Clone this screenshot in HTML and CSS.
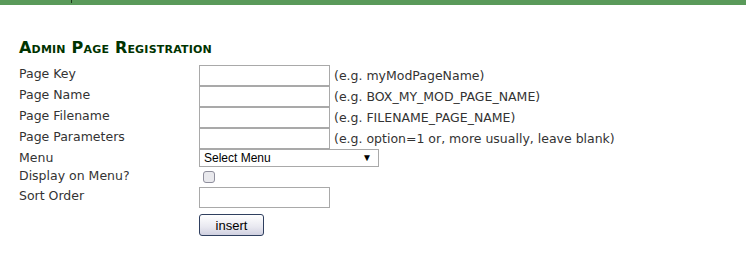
FILE: index.html
```html
<!DOCTYPE html>
<html>
<head>
  <title>Admin Page Registration</title>
  <link rel="stylesheet" href="styles.css">
</head>
<body>
  <div class="topbar"><span class="tick"></span></div>
  <div class="content">
    <h1>Admin Page Registration</h1>
    <form class="reg-form">
      <label for="pageKey">Page Key</label>
      <div class="field"><input type="text" id="pageKey"><span class="hint">(e.g. myModPageName)</span></div>

      <label for="pageName">Page Name</label>
      <div class="field"><input type="text" id="pageName"><span class="hint">(e.g. BOX_MY_MOD_PAGE_NAME)</span></div>

      <label for="pageFile">Page Filename</label>
      <div class="field"><input type="text" id="pageFile"><span class="hint">(e.g. FILENAME_PAGE_NAME)</span></div>

      <label for="pageParams">Page Parameters</label>
      <div class="field"><input type="text" id="pageParams"><span class="hint">(e.g. option=1 or, more usually, leave blank)</span></div>

      <label for="menu">Menu</label>
      <div class="field menu-row">
        <div class="select-box" id="menu">Select Menu<span class="arrow">&#9660;</span></div>
      </div>

      <label for="display">Display on Menu?</label>
      <div class="field check-row"><span class="checkbox" id="display"></span></div>

      <label for="sortOrder">Sort Order</label>
      <div class="field sort-row"><input type="text" id="sortOrder"></div>

      <span></span>
      <div class="field button-row"><button type="button" class="insert-btn">insert</button></div>
    </form>
  </div>
</body>
</html>
```

FILE: styles.css
```css
body {
  margin: 0;
  font-family: "DejaVu Sans", Verdana, sans-serif;
  font-size: 12.5px;
  color: #333;
  background-color: white;
}
.topbar {
  height: 5px;
  background-color: #5a9a5a;
  position: relative;
}
.tick {
  position: absolute;
  left: 71px;
  top: 0;
  width: 1px;
  height: 3px;
  background-color: #1e3a1e;
}
.content {
  padding: 33px 19px 0 19px;
}
h1 {
  margin: 0 0 8px 0;
  font-family: "DejaVu Sans", Tahoma, sans-serif;
  font-size: 16px;
  line-height: 19px;
  font-weight: bold;
  font-variant: small-caps;
  letter-spacing: 0.2px;
  color: #003300;
}
.reg-form {
  display: grid;
  grid-template-columns: 180px auto;
  align-items: start;
}
label {
  line-height: 19px;
  margin-top: -1px;
}
.field {
  display: flex;
  align-items: center;
  height: 21px;
}
input {
  box-sizing: border-box;
  width: 131px;
  height: 21px;
  margin: 0;
  border: 1px solid #a9a9a9;
  padding: 2px;
  font-size: 12px;
}
.hint {
  margin-left: 4px;
}
.menu-row {
  height: 18px;
}
.select-box {
  box-sizing: border-box;
  width: 180px;
  height: 18px;
  border: 1px solid #a9a9a9;
  font-family: "Liberation Sans", Arial, sans-serif;
  font-size: 12px;
  color: black;
  padding: 1px 6px 1px 4px;
  line-height: 14px;
  display: flex;
  justify-content: space-between;
}
.arrow {
  font-size: 10px;
  line-height: 14px;
}
.check-row {
  height: 20px;
  align-items: flex-start;
}
.checkbox {
  display: block;
  box-sizing: border-box;
  width: 12px;
  height: 12px;
  margin: 4px 0 0 4px;
  border: 1px solid #8f8f9d;
  border-radius: 3px;
  background-color: #e9e9ed;
}
.sort-row {
  height: 21px;
}
.button-row {
  height: 22px;
  margin-top: 6px;
}
.insert-btn {
  width: 65px;
  height: 22px;
  padding: 0;
  font-family: "Liberation Sans", Arial, sans-serif;
  font-size: 13px;
  color: black;
  border: 1px solid #2f3f5f;
  border-radius: 3px;
  background: linear-gradient(#ffffff, #e8e8f0 60%, #d0d0e0);
}
```
